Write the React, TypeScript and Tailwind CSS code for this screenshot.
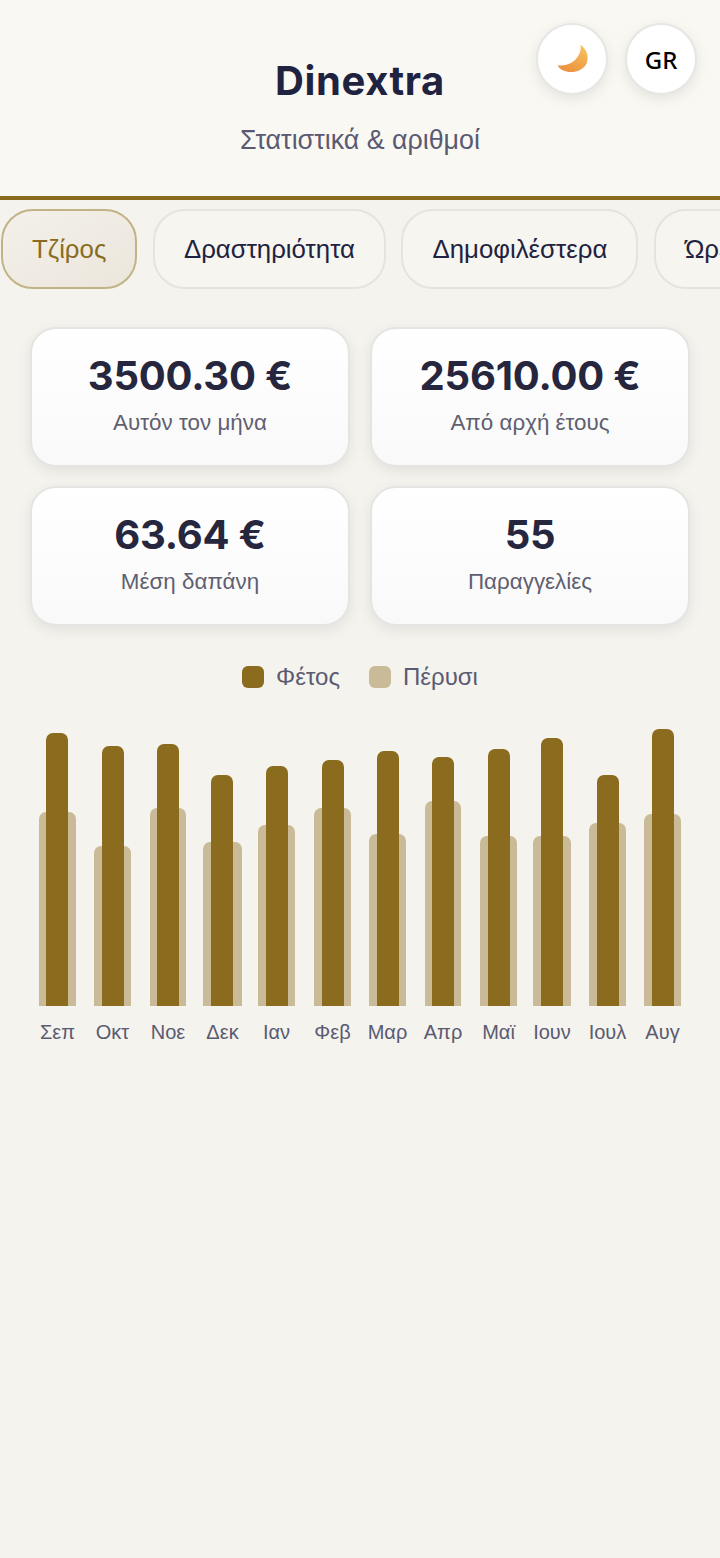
const sans = "font-['Liberation_Sans',sans-serif]";

const tabs = ["Τζίρος", "Δραστηριότητα", "Δημοφιλέστερα", "Ώρες"];
const stats = [
  ["3500.30 €", "Αυτόν τον μήνα"],
  ["25610.00 €", "Από αρχή έτους"],
  ["63.64 €", "Μέση δαπάνη"],
  ["55", "Παραγγελίες"],
];
// label, gap before column, light bar width, light bar height, dark bar height, dark bar inset
const months: [string, number, number, number, number, number][] = [
  ["Σεπ", 0, 37, 194, 273, 7],
  ["Οκτ", 18, 37, 160, 260, 8],
  ["Νοε", 19, 36, 198, 262, 7],
  ["Δεκ", 17, 39, 164, 231, 8],
  ["Ιαν", 16, 37, 181, 240, 8],
  ["Φεβ", 19, 37, 198, 246, 8],
  ["Μαρ", 18, 37, 172, 255, 8],
  ["Απρ", 19, 36, 205, 249, 7],
  ["Μαϊ", 19, 37, 170, 257, 8],
  ["Ιουν", 16, 38, 170, 268, 8],
  ["Ιουλ", 18, 37, 183, 231, 8],
  ["Αυγ", 18, 37, 192, 277, 8],
];

function Moon() {
  return (
    <svg className="ml-[2px]" width="32" height="30" viewBox="113 103 94 88" aria-hidden="true">
      <defs>
        <linearGradient id="moon" x1="0.8" y1="0" x2="0.2" y2="1">
          <stop offset="0" stopColor="#f6c15f" />
          <stop offset="1" stopColor="#ec8f3e" />
        </linearGradient>
      </defs>
      <path
        d="M182 105 C200 118 208 140 200 160 C190 182 155 192 130 180 C122 176 117 170 115 165 C135 168 155 162 168 148 C180 135 185 120 182 105 Z"
        fill="url(#moon)"
      />
    </svg>
  );
}

function RoundButton({ children }: { children: React.ReactNode }) {
  return (
    <button className="flex h-[72px] w-[72px] items-center justify-center rounded-full border-2 border-[#e6e6e4] bg-white shadow-[0_4px_14px_rgba(0,0,0,0.09)]">
      {children}
    </button>
  );
}

export default function App() {
  return (
    <div className={`min-h-[1558px] overflow-hidden bg-[#f5f3ed] ${sans}`}>
      <header className="relative h-[200px] border-b-4 border-[#8b6b1e] bg-[#faf8f3] pt-[56px] text-center">
        <div className="absolute right-[23px] top-[23px] flex gap-[17px]">
          <RoundButton>
            <Moon />
          </RoundButton>
          <RoundButton>
            <span className="pt-[2px] font-['Noto_Sans',sans-serif] text-[24px] font-medium leading-none text-black">GR</span>
          </RoundButton>
        </div>
        <h1 className="font-['Inter',sans-serif] text-[40px] font-bold leading-[50px] tracking-[0.6px] text-[#1f2340]">Dinextra</h1>
        <p className="mt-[16px] text-[26.8px] leading-[36px] text-[#5a5a72]">Στατιστικά & αριθμοί</p>
      </header>

      <nav className="flex gap-[15.6px] overflow-hidden pl-[1px] pt-[9px]">
        {tabs.map((t, i) => (
          <div
            key={t}
            className={
              i === 0
                ? "flex h-[80px] shrink-0 items-center rounded-[32px] border-2 border-[#c2b387] bg-gradient-to-br from-[#f4f1ea] to-[#ebe6dc] px-[29px] text-[25.8px] text-[#8b6b1e]"
                : "flex h-[80px] shrink-0 items-center rounded-[32px] border-2 border-[#e6e3dc] bg-[#f7f5f0] px-[29px] text-[25.8px] text-[#1f2340]"
            }
          >
            {t}
          </div>
        ))}
      </nav>

      <section className="grid grid-cols-2 gap-x-[20px] gap-y-[19px] px-[30px] pt-[38px]">
        {stats.map(([v, l]) => (
          <div
            key={l}
            className="flex h-[140px] flex-col items-center rounded-[26px] border-2 border-[#e4e4e2] bg-gradient-to-b from-white to-[#f9f9f9] pt-[22px] shadow-[0_4px_14px_rgba(0,0,0,0.08)]"
          >
            <div className="font-['Inter',sans-serif] text-[40px] font-bold leading-[50px] tracking-[-0.2px] text-[#26263e]">{v}</div>
            <div className="mt-[7px] text-[22.4px] leading-[30px] text-[#5f5f70]">{l}</div>
          </div>
        ))}
      </section>

      <div className="flex justify-center gap-[29px] pt-[37px] text-[24px] leading-[28px] text-[#5a5a72]">
        <div className="flex items-center gap-[12px]">
          <span className="h-[22px] w-[22px] rounded-[6px] bg-[#8b6b1e]" />
          Φέτος
        </div>
        <div className="flex items-center gap-[12px]">
          <span className="h-[22px] w-[22px] rounded-[6px] bg-[#c9bb98]" />
          Πέρυσι
        </div>
      </div>

      <div className="flex pl-[39px] pt-[38px]">
        {months.map(([m, gap, w, light, dark, inset]) => (
          <div key={m} className="flex flex-col items-center" style={{ marginLeft: gap, width: w }}>
            <div className="relative flex h-[277px] w-full items-end justify-center">
              <div className="w-full rounded-t-[7px] bg-[#c9bb98]" style={{ height: light }} />
              <div className="absolute bottom-0 w-[22px] rounded-t-[7px] bg-[#8b6b1e]" style={{ height: dark, left: inset }} />
            </div>
            <div className="mt-[12px] whitespace-nowrap text-[20px] leading-[28px] text-[#5a5a72]">{m}</div>
          </div>
        ))}
      </div>
    </div>
  );
}
